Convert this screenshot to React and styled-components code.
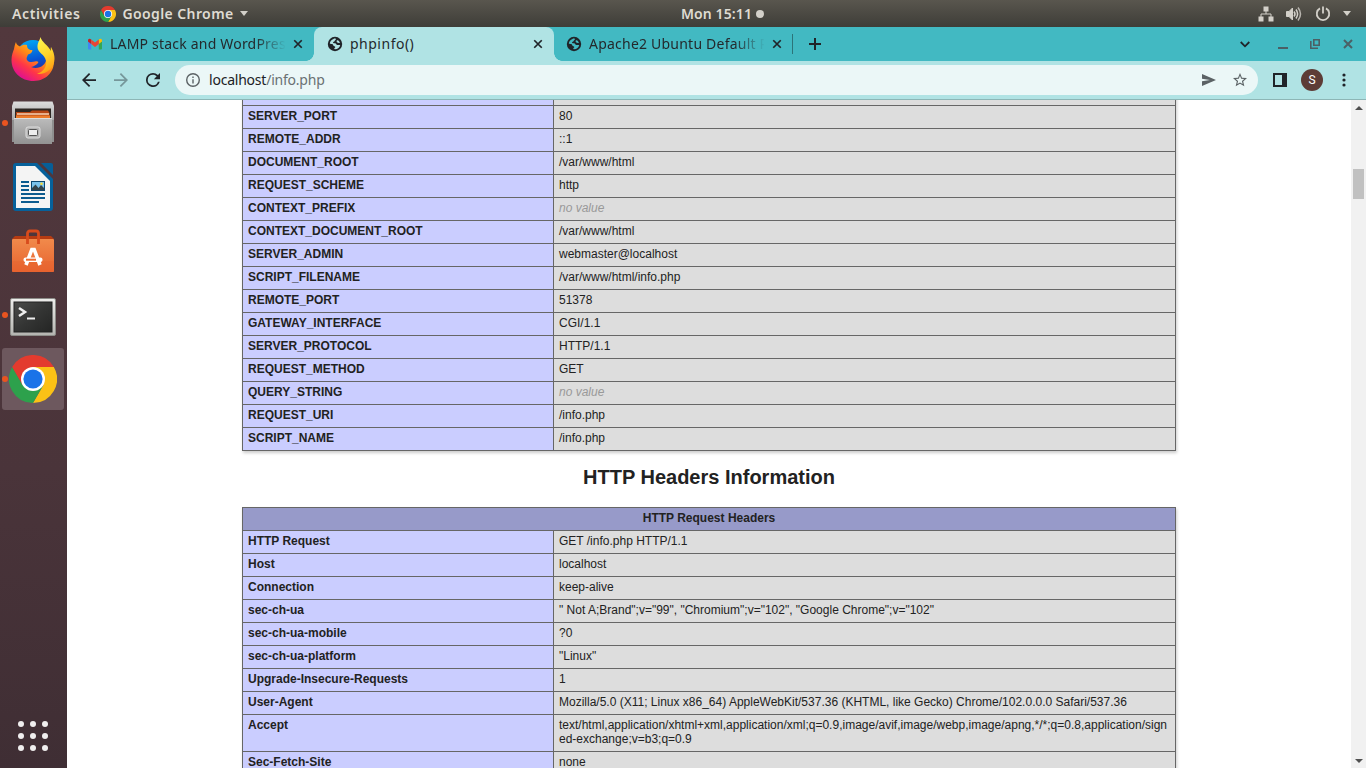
import React from "react";
import styled, { createGlobalStyle, css } from "styled-components";

const ui = `"Noto Sans", "Open Sans", sans-serif`;
const page = `"Liberation Sans", Arial, sans-serif`;

const GlobalStyle = createGlobalStyle`
  * { box-sizing: border-box; }
  body { margin: 0; overflow: hidden; background: #fff; }
  svg { display: block; flex: none; }
`;

const Desktop = styled.div`
  width: 1366px;
  height: 768px;
  display: flex;
  flex-direction: column;
  overflow: hidden;
`;

/* ---------- top panel ---------- */
const Panel = styled.header`
  height: 27px;
  flex: none;
  display: grid;
  grid-template-columns: 669px auto 1fr;
  align-items: center;
  padding: 0 15px 0 12px;
  background: linear-gradient(#59564e, #3e3d38);
  color: #dfdbd2;
  font: 600 14px/27px ${ui};
`;
const PanelGroup = styled.div`
  display: flex;
  align-items: center;
  justify-content: ${(p) => (p.$end ? "flex-end" : "flex-start")};
  gap: ${(p) => p.$gap || 0}px;
`;
const PanelText = styled.span`
  letter-spacing: ${(p) => p.$track || 0}px;
  white-space: nowrap;
`;
const AppMenu = styled.div`
  display: flex;
  align-items: center;
  gap: 6px;
  margin-left: 20px;
`;
const Dot = styled.i`
  width: 8px;
  height: 8px;
  border-radius: 50%;
  background: #d3d0c9;
`;
const Caret = styled.i`
  border: 4.5px solid transparent;
  border-top: 5px solid #d3d0c9;
  border-bottom: 0;
`;

/* ---------- dock ---------- */
const Workspace = styled.div`
  flex: 1;
  min-height: 0;
  display: flex;
`;
const Dock = styled.nav`
  width: 67px;
  flex: none;
  display: flex;
  flex-direction: column;
  justify-content: space-between;
  padding: 1px 3px 17px 2px;
  background: linear-gradient(#52383d, #4a343a 60%, #3f2e34);
`;
const DockApps = styled.div`
  display: flex;
  flex-direction: column;
  gap: 2px;
`;
const DockTile = styled.div`
  position: relative;
  width: 62px;
  height: 62px;
  display: grid;
  place-items: center;
  padding-top: ${(p) => p.$drop || 0}px;
  border-radius: 3px;
  background: ${(p) => (p.$active ? "#6d585e" : "transparent")};
  ${(p) =>
    p.$running &&
    css`
      &::before {
        content: "";
        position: absolute;
        left: 0;
        top: 28px;
        width: 6px;
        height: 6px;
        border-radius: 50%;
        background: #e95420;
      }
    `}
`;
const AppGrid = styled.div`
  align-self: center;
  display: grid;
  grid-template-columns: repeat(3, 6px);
  gap: 6px;
  i { height: 6px; border-radius: 50%; background: #f0eeee; }
`;

/* ---------- browser ---------- */
const Browser = styled.main`
  flex: 1;
  min-width: 0;
  display: flex;
  flex-direction: column;
`;
const TabStrip = styled.div`
  height: 34px;
  flex: none;
  display: flex;
  padding-left: 7px;
  background: #42b9c2;
`;
const TabBox = styled.div`
  position: relative;
  width: ${(p) => p.$w}px;
  height: 34px;
  display: flex;
  align-items: center;
  padding: 0 8px 0 ${(p) => p.$w - 227}px;
  color: #24292c;
  ${(p) =>
    p.$active &&
    css`
      background: #b0e3e4;
      border-radius: 8px 8px 0 0;
      &::before, &::after {
        content: "";
        position: absolute;
        bottom: 0;
        width: 8px;
        height: 8px;
      }
      &::before { left: -8px; background: radial-gradient(circle at 0 0, transparent 7.5px, #b0e3e4 8px); }
      &::after { right: -8px; background: radial-gradient(circle at 100% 0, transparent 7.5px, #b0e3e4 8px); }
    `}
`;
const TabTitle = styled.span`
  width: 175px;
  margin: 0 5px 0 7px;
  overflow: hidden;
  white-space: nowrap;
  font: 14px/32px ${ui};
  letter-spacing: ${(p) => p.$track || 0}px;
  ${(p) => p.$fade && css`mask-image: linear-gradient(90deg, #000 145px, transparent 176px);`}
`;
const TabDivider = styled.i`
  width: 1px;
  height: 20px;
  margin: 7px 16px 0 -1px;
  background: #2c7479;
`;
const NewTab = styled.div`
  display: flex;
  align-items: center;
`;
const WindowButtons = styled.div`
  display: flex;
  align-items: center;
  margin-left: auto;
`;
const ButtonCell = styled.span`
  width: ${(p) => p.$w}px;
  display: flex;
  justify-content: center;
`;
const Toolbar = styled.div`
  height: 39px;
  flex: none;
  display: flex;
  align-items: center;
  padding: 0 6px;
  background: #b0e3e4;
  border-bottom: 1px solid #8db6b6;
`;
const Omnibox = styled.div`
  width: 1083px;
  height: 30px;
  display: flex;
  align-items: center;
  margin: 0 6px 0 6px;
  padding: 0 11px;
  border-radius: 15px;
  background: #ebf7f7;
`;
const Address = styled.span`
  flex: 1;
  margin-left: 9px;
  font: 14px/28px ${ui};
  letter-spacing: ${(p) => p.$track}px;
  color: #202124;
  em { font-style: normal; color: #6a7173; }
`;
const OmniActions = styled.div`
  display: flex;
  align-items: center;
  gap: 17px;
`;
const Avatar = styled.span`
  width: 22px;
  height: 22px;
  border-radius: 50%;
  background: #5d3c36;
  color: #fff;
  font: 12px/22px Roboto, sans-serif;
  text-align: center;
`;

/* ---------- page ---------- */
const Viewport = styled.div`
  flex: 1;
  min-height: 0;
  display: flex;
  overflow: hidden;
`;
const Document = styled.div`
  flex: 1;
  display: flex;
  flex-direction: column;
  align-items: center;
  overflow: hidden;
  background: #fff;
  color: #222;
  font-family: ${page};
`;
const InfoTable = styled.table`
  flex: none;
  width: 934px;
  margin-top: ${(p) => p.$offset || 0}px;
  border-collapse: collapse;
  table-layout: fixed;
  box-shadow: 1px 2px 3px #ccc;
  font-size: 12px;
  line-height: 14px;
`;
const HeadCell = styled.th`
  border: 1px solid #666;
  padding: 3px 5px 5px;
  background: #979ac9;
`;
const KeyCell = styled.td`
  height: 23px;
  border: 1px solid #666;
  padding: 3px 5px 5px;
  background: #cacdff;
  font-weight: bold;
  vertical-align: baseline;
`;
const ValueCell = styled.td`
  border: 1px solid #666;
  padding: 3px 5px 5px;
  background: #ddd;
  overflow-wrap: break-word;
  vertical-align: baseline;
  i { color: #999; }
`;
const SectionTitle = styled.h2`
  flex: none;
  height: 56px;
  margin: 0;
  font-size: 20px;
  line-height: 53px;
`;
const Scrollbar = styled.div`
  width: 15px;
  flex: none;
  display: flex;
  flex-direction: column;
  align-items: center;
  background: #f1f1f1;
`;
const ScrollArrow = styled.i`
  margin: 6px 0 5px;
  border: 4px solid transparent;
  ${(p) => (p.$up ? "border-bottom: 4px solid #505050; border-top: 0;" : "border-top: 4px solid #505050; border-bottom: 0; margin-top: auto;")}
`;
const Thumb = styled.div`
  width: 11px;
  height: 30px;
  margin-top: 54px;
  background: #c1c1c1;
`;

/* ---------- icons ---------- */
const Chrome = ({ size }) => (
  <svg width={size} height={size} viewBox="0 0 48 48">
    <path d="M24 12H44.8A24 24 0 0 1 24 48L34.4 30z" fill="#fbc116" />
    <path d="M3.2 12 13.6 30 24 36 34.4 30 24 48A24 24 0 0 1 3.2 12z" fill="#2da14c" />
    <path d="M3.2 12A24 24 0 0 1 44.8 12H24L13.6 30z" fill="#e33b2e" />
    <circle cx="24" cy="24" r="12" fill="#fff" />
    <circle cx="24" cy="24" r="9.6" fill="#1a73e8" />
  </svg>
);
const Firefox = () => (
  <svg width="46" height="46" viewBox="0 0 46 46">
    <defs>
      <linearGradient id="ffBody" x1=".75" y1=".1" x2=".2" y2=".85">
        <stop offset="0" stopColor="#ffcc22" /><stop offset=".4" stopColor="#ff8a16" />
        <stop offset=".72" stopColor="#ff3647" /><stop offset="1" stopColor="#e31587" />
      </linearGradient>
      <linearGradient id="ffBlue" x1=".3" y1="0" x2=".5" y2="1">
        <stop offset="0" stopColor="#00a8f4" /><stop offset=".6" stopColor="#0754d3" /><stop offset="1" stopColor="#312b90" />
      </linearGradient>
      <linearGradient id="ffTail" x1=".3" y1="0" x2=".6" y2="1">
        <stop offset="0" stopColor="#fff44f" /><stop offset=".5" stopColor="#ffd52b" /><stop offset="1" stopColor="#ff9a12" />
      </linearGradient>
    </defs>
    <circle cx="23" cy="21" r="17" fill="url(#ffBlue)" />
    <path d="M6 6C6 8 8 10 10 10.500C12 9 14 8.500 17 9C17 12 18 13 20.500 14H22.500C22 17 20 18 18 18.500C17 21 16 22 17 24C19 27 23 26 25 25.500C28 25 29 26 28 27C26 29 24 30.500 21 31C28 34 36 30 36.500 22C37 16 31 12 29 8C34 12 41 13 43.500 22C46 34 37 45 23.500 45C11 45 1.500 36 1.500 24C1.500 19 3 16 4 13C4.500 10 5 8 6 6z" fill="url(#ffBody)" />
    <path d="M30.500 1C30 4 27.500 6 27.500 11C27.500 17 35 18 36 25C37 31 33 36 27 38C36 39 44.500 32 44.500 23C44.500 17 42 13 41 11C40.500 13 41 14 41 15C38 9 31.500 6 30.500 1z" fill="url(#ffTail)" />
  </svg>
);
const Files = () => (
  <svg width="44" height="46" viewBox="0 0 44 46">
    <defs>
      <linearGradient id="flTop" x1="0" y1="0" x2="0" y2="1"><stop offset="0" stopColor="#dedede" /><stop offset="1" stopColor="#a7a7a7" /></linearGradient>
      <linearGradient id="flFront" x1="0" y1="0" x2="0" y2="1"><stop offset="0" stopColor="#bcbcbc" /><stop offset="1" stopColor="#929292" /></linearGradient>
    </defs>
    <path d="M1 6V42H43V6z" fill="#8f8f8f" />
    <path d="M1 6L2.500 1.500H41.500L43 6V20H1z" fill="url(#flTop)" />
    <rect x="4" y="8.500" width="36" height="10" fill="#2d2723" />
    <path d="M5 12H19L21 10.500H37L38.500 13V19H5z" fill="#b54514" />
    <path d="M6 14H38" stroke="#f7d3b4" strokeWidth="1.500" />
    <path d="M5 15.500H39V19H5z" fill="#ed7c2b" />
    <path d="M3 18H41V44H3z" fill="url(#flFront)" />
    <path d="M3 18.500H41" stroke="#ddd" />
    <rect x="15" y="27" width="14" height="11" rx="2" fill="#b5b5b5" stroke="#dedede" />
    <rect x="17.500" y="29.500" width="9" height="6" rx="1" fill="#eee" stroke="#555" />
  </svg>
);
const Writer = () => (
  <svg width="40" height="48" viewBox="0 0 40 48">
    <path d="M3 0H24L40 16V45Q40 48 37 48H3Q0 48 0 45V3Q0 0 3 0z" fill="#06619b" />
    <path d="M28 0H38Q40 0 40 2V12z" fill="#075e97" />
    <path d="M3 3H22L37 18V45H3z" fill="#f4f4f4" />
    <path d="M8 19H16M8 23H16M8 27H16M8 31H32M8 35H32M8 39H26" stroke="#0b5b8f" strokeWidth="2" />
    <rect x="18.500" y="18.500" width="13" height="9" fill="#7bc3ec" stroke="#0b4770" />
    <path d="M19 27V25L22.500 21.500L25.500 25L28 22L31 25V27z" fill="#35444a" />
    <circle cx="28.500" cy="20.700" r="1.300" fill="#f8db38" />
  </svg>
);
const Software = () => (
  <svg width="44" height="46" viewBox="0 0 44 46">
    <defs><linearGradient id="bag" x1="0" y1="0" x2="0" y2="1"><stop offset="0" stopColor="#f18a4b" /><stop offset="1" stopColor="#e7632f" /></linearGradient></defs>
    <path d="M1 11L4 8H40L43 11z" fill="#b53b12" />
    <rect x="1" y="11" width="42" height="33" rx="1" fill="url(#bag)" />
    <path d="M1 33H43V44H1z" fill="#e8602e" opacity=".35" />
    <path d="M16.500 16V5.500Q16.500 3 19 3H25Q27.500 3 27.500 5.500V16" fill="none" stroke="#d84b1c" strokeWidth="2.800" />
    <path d="M15 37L20.800 21.500H23.200L29 37" fill="none" stroke="#fff" strokeWidth="3.600" />
    <rect x="12.500" y="29.500" width="19" height="4.500" rx="2" fill="#fff" />
    <rect x="15" y="30.700" width="10" height="2" fill="#ed6c34" />
    <path d="M18.500 34.500H25.500V37H18.500z" fill="#e9682f" />
  </svg>
);
const Terminal = () => (
  <svg width="46" height="38" viewBox="0 0 46 38">
    <defs>
      <linearGradient id="tmFrame" x1="0" y1="0" x2="0" y2="1"><stop offset="0" stopColor="#eeeeec" /><stop offset="1" stopColor="#b4b4b0" /></linearGradient>
      <linearGradient id="tmScreen" x1="0" y1="0" x2="1" y2="1"><stop offset="0" stopColor="#4b4c4a" /><stop offset=".5" stopColor="#343534" /><stop offset="1" stopColor="#242524" /></linearGradient>
    </defs>
    <rect x=".5" y=".5" width="45" height="37" rx="1.500" fill="url(#tmFrame)" stroke="#8c8c88" />
    <rect x="4" y="4" width="38" height="30" fill="url(#tmScreen)" stroke="#222" />
    <path d="M9 10L15 14L9 18" fill="none" stroke="#eee" strokeWidth="2.500" />
    <path d="M17 20.500H25" stroke="#eee" strokeWidth="2" />
  </svg>
);
const Gmail = () => (
  <svg width="16" height="16" viewBox="0 0 16 16">
    <path d="M1 5V12.500Q1 13.500 2 13.500H4.200V7z" fill="#4285f4" />
    <path d="M15 5V12.500Q15 13.500 14 13.500H11.800V7z" fill="#34a853" />
    <path d="M1 4.200Q1 2.500 2.800 2.700L4.200 3.600V8L1 5.600z" fill="#c5221f" />
    <path d="M15 4.200Q15 2.500 13.200 2.700L11.800 3.600V8L15 5.600z" fill="#fbbc04" />
    <path d="M4.200 3.600L8 6.500L11.800 3.600V8L8 10.900L4.200 8z" fill="#ea4335" />
  </svg>
);
const Globe = ({ land }) => (
  <svg width="16" height="16" viewBox="0 0 16 16">
    <circle cx="8" cy="8" r="7.200" fill="#202429" />
    <path d="M2.800 7.400C3.100 5.200 4.300 3.600 6.500 2.900C7 2.500 8 2.500 8.800 2.700C9.400 3.800 7.700 4.100 7.600 5C7.500 5.900 6 5.600 6 6.400C6.200 7.200 7.400 7 8.300 7.300C9.400 7.600 9.200 8.900 10.300 9H13.200C12.800 11.600 10.800 13.200 8 13.300C7 13.200 7 12.500 7.600 12C8.700 11.500 8.400 10.600 7.300 10.300C6 10 6.300 8.700 5.300 8.100C4.500 7.700 3.500 8 2.800 7.400z" fill={land} />
    <path d="M10.100 4.300C11 3.800 12.600 5.500 12.900 6.800C12 7.200 10.700 6.900 10 6.300C9.500 5.700 9.400 4.700 10.100 4.300z" fill={land} />
  </svg>
);
const Cross = ({ size = 8, color = "#202429", w = 1.7, box = 16 }) => (
  <svg width={box} height={box} viewBox={`${-box / 2} ${-box / 2} ${box} ${box}`}>
    <path d={`M${-size / 2} ${-size / 2}L${size / 2} ${size / 2}M${size / 2} ${-size / 2}L${-size / 2} ${size / 2}`} stroke={color} strokeWidth={w} />
  </svg>
);
const Material = ({ d, box = "4 4 16 16", w = 14, h = w, color = "#202429" }) => (
  <svg width={w} height={h} viewBox={box}><path d={d} fill={color} /></svg>
);
const BACK = "M20 11H7.830l5.590-5.590L12 4l-8 8 8 8 1.410-1.410L7.830 13H20z";
const FORWARD = "M12 4l-1.410 1.410L16.170 11H4v2h12.170l-5.580 5.590L12 20l8-8z";
const RELOAD = "M17.650 6.350A7.958 7.958 0 0 0 12 4a8 8 0 1 0 7.730 10h-2.080A6 6 0 1 1 12 6c1.660 0 3.140.69 4.220 1.780L13 11h7V4z";
const INFO = "M11 7h2v2h-2zm0 4h2v6h-2zm1-9a10 10 0 1 0 0 20 10 10 0 0 0 0-20zm0 18a8 8 0 1 1 0-16 8 8 0 0 1 0 16z";
const STAR = "M22 9.240l-7.190-.62L12 2 9.190 8.630 2 9.240l5.460 4.730L5.820 21 12 17.270 18.180 21l-1.630-7.030zM12 15.400l-3.760 2.270 1-4.280-3.320-2.880 4.380-.38L12 6.100l1.710 4.040 4.380.38-3.320 2.880 1 4.280z";
const SEND = "M2 21L23 12 2 3v7l12 2-12 2z";

const Network = () => (
  <svg width="16" height="16" viewBox="0 0 16 16" fill="#d3d0c9">
    <path d="M5.500 0.500h5v5h-5zM.500 10.500h5v5h-5zM10.500 10.500h5v5h-5z" />
    <path d="M8 5V8M3 11V8H13V11" fill="none" stroke="#d3d0c9" />
  </svg>
);
const Volume = () => (
  <svg width="16" height="16" viewBox="0 0 16 16" fill="none" stroke="#d3d0c9">
    <path d="M.500 5.500H3L6.500 2V14L3 10.500H.500z" fill="#d3d0c9" />
    <path d="M8 5.500Q10 8 8 10.500M10 3.500Q13.200 8 10 12.500" strokeWidth="1.500" />
    <path d="M12 1.500Q17 8 12 14.500" strokeWidth="1.500" opacity=".8" />
  </svg>
);
const Power = () => (
  <svg width="16" height="16" viewBox="0 0 16 16" fill="none" stroke="#d3d0c9" strokeWidth="1.800">
    <path d="M5 2.400A6.200 6.200 0 1 0 11 2.400M8 .500V7.500" />
  </svg>
);

/* ---------- data ---------- */
const serverRows = [
  ["", ""],
  ["SERVER_PORT", "80"],
  ["REMOTE_ADDR", "::1"],
  ["DOCUMENT_ROOT", "/var/www/html"],
  ["REQUEST_SCHEME", "http"],
  ["CONTEXT_PREFIX", null],
  ["CONTEXT_DOCUMENT_ROOT", "/var/www/html"],
  ["SERVER_ADMIN", "webmaster@localhost"],
  ["SCRIPT_FILENAME", "/var/www/html/info.php"],
  ["REMOTE_PORT", "51378"],
  ["GATEWAY_INTERFACE", "CGI/1.1"],
  ["SERVER_PROTOCOL", "HTTP/1.1"],
  ["REQUEST_METHOD", "GET"],
  ["QUERY_STRING", null],
  ["REQUEST_URI", "/info.php"],
  ["SCRIPT_NAME", "/info.php"],
];
const headerRows = [
  ["HTTP Request", "GET /info.php HTTP/1.1"],
  ["Host", "localhost"],
  ["Connection", "keep-alive"],
  ["sec-ch-ua", '" Not A;Brand";v="99", "Chromium";v="102", "Google Chrome";v="102"'],
  ["sec-ch-ua-mobile", "?0"],
  ["sec-ch-ua-platform", '"Linux"'],
  ["Upgrade-Insecure-Requests", "1"],
  ["User-Agent", "Mozilla/5.0 (X11; Linux x86_64) AppleWebKit/537.36 (KHTML, like Gecko) Chrome/102.0.0.0 Safari/537.36"],
  ["Accept", "text/html,application/xhtml+xml,application/xml;q=0.9,image/avif,image/webp,image/apng,*/*;q=0.8,application/signed-exchange;v=b3;q=0.9"],
  ["Sec-Fetch-Site", "none"],
];

const Rows = ({ rows }) =>
  rows.map(([name, value]) => (
    <tr key={name}>
      <KeyCell>{name}</KeyCell>
      <ValueCell>{value === null ? <i>no value</i> : value}</ValueCell>
    </tr>
  ));

const KeyColumn = styled.col`
  width: 311px;
`;
const Columns = () => (
  <colgroup><KeyColumn /><col /></colgroup>
);

const Tab = ({ icon, title, active, fade, track, width = 240 }) => (
  <TabBox $active={active} $w={width}>
    {icon}
    <TabTitle $fade={fade} $track={track}>{title}</TabTitle>
    <Cross size={7.5} />
  </TabBox>
);

export default function App() {
  return (
    <Desktop>
      <GlobalStyle />
      <Panel>
        <PanelGroup>
          <PanelText $track={0.6}>Activities</PanelText>
          <AppMenu>
            <Chrome size={16} />
            <PanelText $track={0.4}>Google Chrome</PanelText>
            <Caret />
          </AppMenu>
        </PanelGroup>
        <PanelGroup $gap={4}>
          <PanelText $track={0.1}>Mon 15:11</PanelText>
          <Dot />
        </PanelGroup>
        <PanelGroup $end $gap={12.5}>
          <Network />
          <Volume />
          <Power />
          <Caret />
        </PanelGroup>
      </Panel>
      <Workspace>
        <Dock>
          <DockApps>
            <DockTile><Firefox /></DockTile>
            <DockTile $running><Files /></DockTile>
            <DockTile><Writer /></DockTile>
            <DockTile><Software /></DockTile>
            <DockTile $running $drop={4}><Terminal /></DockTile>
            <DockTile $running $active><Chrome size={48} /></DockTile>
          </DockApps>
          <AppGrid>{Array.from({ length: 9 }, (_, n) => <i key={n} />)}</AppGrid>
        </Dock>
        <Browser>
          <TabStrip>
            <Tab icon={<Gmail />} title="LAMP stack and WordPres" track={0.2} fade />
            <Tab icon={<Globe land="#b0e3e4" />} title="phpinfo()" track={0.5} active />
            <Tab icon={<Globe land="#42b9c2" />} title="Apache2 Ubuntu Default P" track={0.22} width={239} fade />
            <TabDivider />
            <NewTab>
              <svg width="12" height="12" viewBox="0 0 12 12"><path d="M6 0V12M0 6H12" stroke="#202429" strokeWidth="2" /></svg>
            </NewTab>
            <WindowButtons>
              <ButtonCell $w={42}>
                <svg width="10" height="7" viewBox="0 0 10 7"><path d="M.700 1L5 5.300L9.300 1" fill="none" stroke="#202429" strokeWidth="1.800" /></svg>
              </ButtonCell>
              <ButtonCell $w={34}>
                <svg width="10" height="10" viewBox="0 0 10 10"><path d="M0 9H10" stroke="#4b6065" strokeWidth="2" /></svg>
              </ButtonCell>
              <ButtonCell $w={30}>
                <svg width="10" height="10" viewBox="0 0 10 10" fill="none" stroke="#4b6065" strokeWidth="1.600"><path d="M3.800.800H9.200V6.200H3.800zM.800 2V9.200H8" /></svg>
              </ButtonCell>
              <ButtonCell $w={36}><Cross size={8} color="#4b6065" w={2} box={12} /></ButtonCell>
            </WindowButtons>
          </TabStrip>
          <Toolbar>
            <ButtonCell $w={32}><Material d={BACK} w={14} /></ButtonCell>
            <ButtonCell $w={32}><Material d={FORWARD} w={14} color="#76979a" /></ButtonCell>
            <ButtonCell $w={32}><Material d={RELOAD} w={14} /></ButtonCell>
            <Omnibox>
              <Material d={INFO} box="2 2 20 20" color="#5b6265" />
              <Address $track={-0.22}>localhost<em>/info.php</em></Address>
              <OmniActions>
                <Material d={SEND} box="2 3 21 18" w={14} h={12} color="#5b6265" />
                <Material d={STAR} box="2 2 20 20" w={14} color="#5b6265" />
              </OmniActions>
            </Omnibox>
            <ButtonCell $w={32}>
              <svg width="14" height="14" viewBox="0 0 14 14"><path d="M0 0H14V14H0zM2 2V12H9V2z" fillRule="evenodd" fill="#202429" /><path d="M2 2H9V12H2z" fill="#b0e3e4" /></svg>
            </ButtonCell>
            <ButtonCell $w={32}><Avatar>S</Avatar></ButtonCell>
            <ButtonCell $w={32}>
              <svg width="4" height="14" viewBox="0 0 4 14" fill="#202429"><circle cx="2" cy="2" r="1.600" /><circle cx="2" cy="7" r="1.600" /><circle cx="2" cy="12" r="1.600" /></svg>
            </ButtonCell>
          </Toolbar>
          <Viewport>
            <Document>
              <InfoTable $offset={-18}>
                <Columns />
                <tbody><Rows rows={serverRows} /></tbody>
              </InfoTable>
              <SectionTitle>HTTP Headers Information</SectionTitle>
              <InfoTable>
                <Columns />
                <tbody>
                  <tr><HeadCell colSpan={2}>HTTP Request Headers</HeadCell></tr>
                  <Rows rows={headerRows} />
                </tbody>
              </InfoTable>
            </Document>
            <Scrollbar>
              <ScrollArrow $up />
              <Thumb />
              <ScrollArrow />
            </Scrollbar>
          </Viewport>
        </Browser>
      </Workspace>
    </Desktop>
  );
}
